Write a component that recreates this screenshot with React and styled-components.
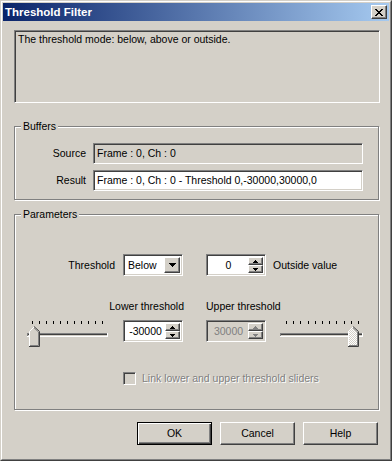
import React from 'react';
import styled, { createGlobalStyle, css } from 'styled-components';

const FACE = '#D4D0C8';

const Global = createGlobalStyle`
  html, body { margin: 0; padding: 0; background: ${FACE}; }
  body {
    font-family: "Liberation Sans", Arial, sans-serif;
    font-size: 10.5px;
    line-height: 13px;
    color: #000;
  }
  * { box-sizing: border-box; }
`;

const sunken = css`
  border: 1px solid;
  border-color: #808080 #fff #fff #808080;
  box-shadow: inset 1px 1px 0 #404040, inset -1px -1px 0 ${FACE};
`;

const raised = css`
  border: 1px solid;
  border-color: #fff #404040 #404040 #fff;
  box-shadow: inset -1px -1px 0 #808080;
`;

const Window = styled.div`
  width: 392px;
  height: 461px;
  background: ${FACE};
  border: 1px solid;
  border-color: ${FACE} #404040 #404040 ${FACE};
  display: flex;
  flex-direction: column;
`;

const Frame = styled.div`
  flex: 1;
  border: 1px solid;
  border-color: #fff #808080 #808080 #fff;
  padding: 1px;
  display: flex;
  flex-direction: column;
`;

const TitleBar = styled.div`
  height: 18px;
  flex: none;
  display: flex;
  align-items: center;
  justify-content: space-between;
  background: linear-gradient(to right, #0A246A, #A6CAF0);
  padding: 0 2px 0 2px;
`;

const Title = styled.span`
  color: #fff;
  font-weight: bold;
  font-size: 11.5px;
`;

const CloseButton = styled.div`
  ${raised};
  width: 16px;
  height: 14px;
  background: ${FACE};
  display: flex;
  align-items: center;
  justify-content: center;
`;

const Content = styled.div`
  flex: 1;
  display: flex;
  flex-direction: column;
  padding: 9px 9px 0 11px;
`;

const Description = styled.div`
  ${sunken};
  height: 73px;
  padding: 2px 3px;
  background: ${FACE};
`;

const Group = styled.div`
  position: relative;
  margin-right: 1px;
  border: 1px solid #808080;
  box-shadow: inset 1px 1px 0 #fff, 1px 1px 0 #fff;
  margin-top: ${p => p.$top}px;
  padding: ${p => p.$pad};
`;

const Legend = styled.span`
  position: absolute;
  top: -7px;
  left: 6px;
  padding: 0 2px;
  background: ${FACE};
`;

const FieldRow = styled.div`
  display: flex;
  align-items: center;
  & + & { margin-top: 6px; }
`;

const FieldLabel = styled.span`
  width: 71px;
  text-align: right;
  margin-right: 7px;
`;

const Field = styled.div`
  ${sunken};
  width: 270px;
  height: 21px;
  display: flex;
  align-items: center;
  padding-left: 3px;
  background: ${p => (p.$readOnly ? FACE : '#fff')};
`;

const ParamGrid = styled.div`
  display: grid;
  grid-template-columns: 96px 83px 74px 83px;
  grid-template-rows: 22px 44px 26px 39px;
`;

const Cell = styled.div`
  grid-column: ${p => p.$col};
  grid-row: ${p => p.$row};
  display: flex;
  align-items: ${p => p.$align || 'center'};
  justify-content: ${p => p.$justify || 'flex-start'};
  margin-right: ${p => p.$mr || 0}px;
  margin-bottom: ${p => p.$mb || 0}px;
  white-space: nowrap;
`;

const Combo = styled.div`
  ${sunken};
  width: 60px;
  height: 22px;
  background: #fff;
  display: flex;
  padding: 2px;
`;

const ComboText = styled.span`
  flex: 1;
  display: flex;
  align-items: center;
  padding-left: 2px;
`;

const DropButton = styled.div`
  ${raised};
  width: 16px;
  background: ${FACE};
  display: flex;
  align-items: center;
  justify-content: center;
`;

const SpinBox = styled.div`
  ${sunken};
  width: 60px;
  height: 22px;
  display: flex;
  padding: 2px;
  background: ${p => (p.$disabled ? FACE : '#fff')};
  color: ${p => (p.$disabled ? '#808080' : '#000')};
`;

const SpinValue = styled.span`
  flex: 1;
  display: flex;
  align-items: center;
  justify-content: center;
`;

const SpinButtons = styled.div`
  width: 15px;
  display: flex;
  flex-direction: column;
`;

const SpinButton = styled.div`
  ${raised};
  flex: 1;
  background: ${FACE};
  display: flex;
  align-items: center;
  justify-content: center;
`;

const SideLabel = styled.span`
  margin-left: 7px;
`;

const CheckRow = styled.div`
  display: flex;
  align-items: center;
  color: #808080;
  text-shadow: 1px 1px 0 #fff;
`;

const CheckBox = styled.span`
  ${sunken};
  width: 13px;
  height: 13px;
  background: ${FACE};
  margin-right: 6px;
`;

const ButtonRow = styled.div`
  display: flex;
  justify-content: flex-end;
  gap: 8px;
  margin-top: 12px;
  margin-right: 2px;
`;

const Button = styled.div`
  width: 75px;
  height: 23px;
  background: ${FACE};
  display: flex;
  align-items: center;
  justify-content: center;
  ${p =>
    p.$default
      ? css`
          border: 1px solid #000;
          box-shadow: inset 1px 1px 0 #fff, inset -1px -1px 0 #404040, inset -2px -2px 0 #808080;
        `
      : raised}
`;

const TinyArrow = ({ up, color = '#000' }) => (
  <svg width="5" height="3" viewBox="0 0 5 3" style={{ display: 'block' }} shapeRendering="crispEdges">
    {up ? (
      <path d="M2 0h1v1h1v1h1v1H0V2h1V1h1z" fill={color} />
    ) : (
      <path d="M0 0h5v1H4v1H3v1H2V2H1V1H0z" fill={color} />
    )}
  </svg>
);

const DownArrow = () => (
  <svg width="7" height="4" viewBox="0 0 7 4" style={{ display: 'block' }} shapeRendering="crispEdges">
    <path d="M0 0h7v1H6v1H5v1H4v1H3V3H2V2H1V1H0z" fill="#000" />
  </svg>
);

const Slider = ({ width, thumbX, ticksStart, ticksEnd, dither }) => {
  const ticks = [];
  for (let i = 0; i < 11; i++) {
    ticks.push(Math.round(ticksStart + ((ticksEnd - ticksStart) * i) / 10));
  }
  const t = thumbX;
  const pid = dither ? 'dithR' : 'dithL';
  return (
    <svg width={width} height={27} viewBox={`0 0 ${width} 27`} style={{ display: 'block' }} shapeRendering="crispEdges">
      <defs>
        <pattern id={pid} width="2" height="2" patternUnits="userSpaceOnUse">
          <rect width="2" height="2" fill="#fff" />
          <rect width="1" height="1" fill={FACE} />
          <rect x="1" y="1" width="1" height="1" fill={FACE} />
        </pattern>
      </defs>
      {ticks.map(x => (
        <rect key={x} x={x} y={1} width={1} height={3} fill="#000" />
      ))}
      <rect x={0} y={13} width={width} height={4} fill="#fff" />
      <rect x={0} y={13} width={width - 1} height={1} fill="#808080" />
      <rect x={0} y={13} width={1} height={3} fill="#808080" />
      <rect x={1} y={14} width={width - 2} height={1} fill="#404040" />
      <rect x={1} y={15} width={width - 2} height={1} fill={FACE} />
      <polygon
        points={`${t},11 ${t + 5},6 ${t + 10},11 ${t + 10},26 ${t},26`}
        fill={dither ? `url(#${pid})` : FACE}
        shapeRendering="auto"
      />
      <path d={`M${t + 0.5} 26 V11.5 L${t + 5} 7`} stroke="#fff" fill="none" shapeRendering="auto" />
      <path d={`M${t + 5} 6.5 L${t + 10.5} 11.5 V26.5 H${t}`} stroke="#404040" fill="none" shapeRendering="auto" />
      <path d={`M${t + 5} 7.8 L${t + 9.5} 12 V25.5 H${t + 1}`} stroke="#808080" fill="none" shapeRendering="auto" />
    </svg>
  );
};

const Spin = ({ value, disabled }) => {
  const c = disabled ? '#808080' : '#000';
  return (
    <SpinBox $disabled={disabled}>
      <SpinValue>{value}</SpinValue>
      <SpinButtons>
        <SpinButton><TinyArrow up color={c} /></SpinButton>
        <SpinButton><TinyArrow color={c} /></SpinButton>
      </SpinButtons>
    </SpinBox>
  );
};

export default function App() {
  return (
    <>
      <Global />
      <Window>
        <Frame>
          <TitleBar>
            <Title>Threshold Filter</Title>
            <CloseButton>
              <svg width="8" height="7" viewBox="0 0 8 7" style={{ display: 'block' }} shapeRendering="crispEdges">
                <path d="M0 0h2v1h1v1h2V1h1V0h2v1H7v1H6v1H5v1h1v1h1v1h1v1H6V6H5V5H3v1H2v1H0V6h1V5h1V4h1V3H2V2H1V1H0z" fill="#000" />
              </svg>
            </CloseButton>
          </TitleBar>
          <Content>
            <Description>The threshold mode: below, above or outside.</Description>

            <Group $top={23} $pad="16px 0 8px 0">
              <Legend>Buffers</Legend>
              <FieldRow>
                <FieldLabel>Source</FieldLabel>
                <Field $readOnly>Frame : 0, Ch : 0</Field>
              </FieldRow>
              <FieldRow>
                <FieldLabel>Result</FieldLabel>
                <Field>Frame : 0, Ch : 0 - Threshold 0,-30000,30000,0</Field>
              </FieldRow>
            </Group>

            <Group $top={14} $pad="39px 0 24px 12px">
              <Legend>Parameters</Legend>
              <ParamGrid>
                <Cell $col="1" $row="1" $justify="flex-end" $mr={8}>Threshold</Cell>
                <Cell $col="2" $row="1">
                  <Combo>
                    <ComboText>Below</ComboText>
                    <DropButton>
                      <DownArrow />
                    </DropButton>
                  </Combo>
                </Cell>
                <Cell $col="3 / 5" $row="1">
                  <Spin value="0" />
                  <SideLabel>Outside value</SideLabel>
                </Cell>

                <Cell $col="1 / 3" $row="2" $justify="flex-end" $align="flex-end" $mr={22} $mb={7}>
                  Lower threshold
                </Cell>
                <Cell $col="3 / 5" $row="2" $align="flex-end" $mb={7}>
                  Upper threshold
                </Cell>

                <Cell $col="1" $row="3" $align="flex-start">
                  <Slider width={81} thumbX={2} ticksStart={5} ticksEnd={75} />
                </Cell>
                <Cell $col="2" $row="3" $align="flex-start">
                  <Spin value="-30000" />
                </Cell>
                <Cell $col="3" $row="3" $align="flex-start">
                  <Spin value="30000" disabled />
                </Cell>
                <Cell $col="4" $row="3" $align="flex-start">
                  <Slider width={83} thumbX={68} ticksStart={6} ticksEnd={78} dither />
                </Cell>

                <Cell $col="2 / 5" $row="4" $align="flex-end">
                  <CheckRow>
                    <CheckBox />
                    Link lower and upper threshold sliders
                  </CheckRow>
                </Cell>
              </ParamGrid>
            </Group>

            <ButtonRow>
              <Button $default>OK</Button>
              <Button>Cancel</Button>
              <Button>Help</Button>
            </ButtonRow>
          </Content>
        </Frame>
      </Window>
    </>
  );
}
